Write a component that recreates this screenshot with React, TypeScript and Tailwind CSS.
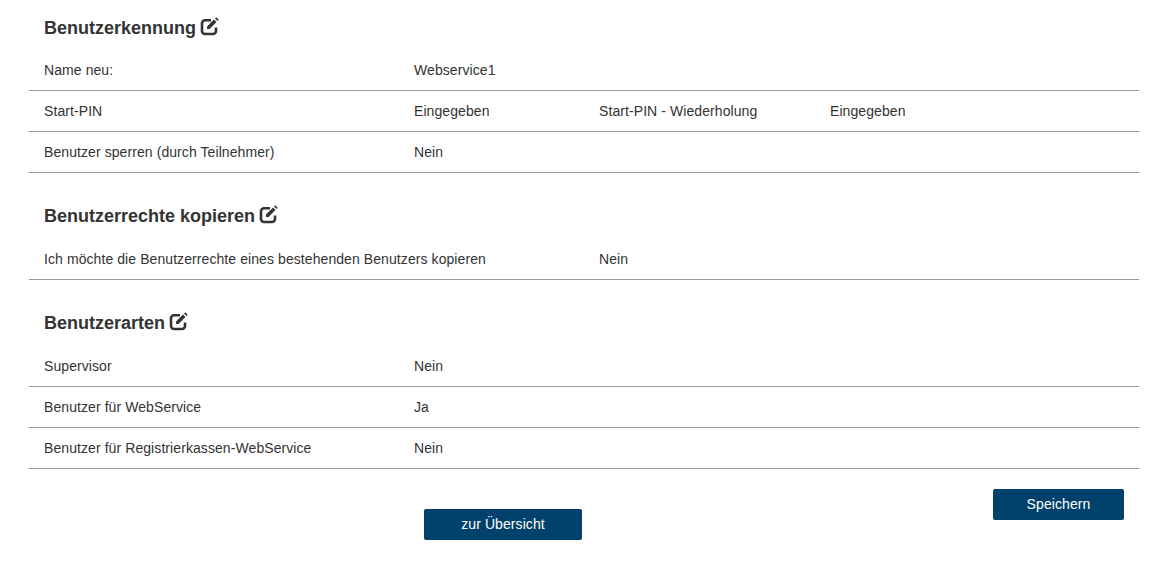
type Cell = { text: string; width: string };

function EditIcon({ className }: { className: string }) {
  return (
    <svg viewBox="0 0 20 20" className={`ml-[4px] h-[20px] w-[20px] text-[#333333] ${className}`} fill="none">
      <path
        d="M11 4.2H5a3 3 0 0 0-3 3V15a3 3 0 0 0 3 3h8a3 3 0 0 0 3-3v-3.5"
        stroke="currentColor"
        strokeWidth="2.6"
      />
      <path d="M7 10.5 14 3.5 16.5 6 9.5 13H7Z" fill="currentColor" />
      <path d="M15 2.5 16.2 1.3 18.7 3.8 17.5 5Z" fill="currentColor" />
    </svg>
  );
}

function Heading({ title, className, iconClass }: { title: string; className: string; iconClass: string }) {
  return (
    <h2 className={`flex items-center px-[15px] text-[18px] font-bold leading-[20px] text-[#333333] ${className}`}>
      {title}
      <EditIcon className={iconClass} />
    </h2>
  );
}

function Row({ cells }: { cells: Cell[] }) {
  return (
    <div className="flex h-[41px] items-center border-b border-[#999999] px-[15px] text-[14px] tracking-[0.08px] text-[#333333]">
      {cells.map((c) => (
        <div key={c.text} className={`shrink-0 ${c.width}`}>
          {c.text}
        </div>
      ))}
    </div>
  );
}

export default function App() {
  return (
    <div className="h-[567px] w-[1151px] overflow-hidden bg-white font-['Liberation_Sans',Arial,sans-serif]">
      <div className="ml-[29px] w-[1110px]">
        <Heading title="Benutzerkennung" className="pt-[18px]" iconClass="-mt-[5px]" />
        <div className="mt-[12px]">
          <Row cells={[{ text: "Name neu:", width: "w-[370px]" }, { text: "Webservice1", width: "w-[185px]" }]} />
          <Row
            cells={[
              { text: "Start-PIN", width: "w-[370px]" },
              { text: "Eingegeben", width: "w-[185px]" },
              { text: "Start-PIN - Wiederholung", width: "w-[231px]" },
              { text: "Eingegeben ", width: "w-[185px]" },
            ]}
          />
          <Row cells={[{ text: "Benutzer sperren (durch Teilnehmer)", width: "w-[370px]" }, { text: "Nein", width: "w-[185px]" }]} />
        </div>
        <Heading title="Benutzerrechte kopieren" className="mt-[33px]" iconClass="-mt-[5px]" />
        <div className="mt-[13px]">
          <Row
            cells={[
              { text: "Ich möchte die Benutzerrechte eines bestehenden Benutzers kopieren", width: "w-[555px]" },
              { text: "Nein", width: "w-[185px]" },
            ]}
          />
        </div>
        <Heading title="Benutzerarten" className="mt-[33px]" iconClass="-mt-[5px]" />
        <div className="mt-[13px]">
          <Row cells={[{ text: "Supervisor", width: "w-[370px]" }, { text: "Nein", width: "w-[185px]" }]} />
          <Row cells={[{ text: "Benutzer für WebService", width: "w-[370px]" }, { text: "Ja", width: "w-[185px]" }]} />
          <Row cells={[{ text: "Benutzer für Registrierkassen-WebService", width: "w-[370px]" }, { text: "Nein", width: "w-[185px]" }]} />
        </div>
        <div className="flex items-start pt-[20px]">
          <button className="ml-[395px] mt-[20px] h-[31px] w-[158px] rounded-[2px] bg-[#00426b] text-[14px] tracking-[0.08px] text-white">
            zur Übersicht
          </button>
          <button className="ml-[411px] h-[31px] w-[131px] rounded-[2px] bg-[#00426b] text-[14px] tracking-[0.08px] text-white">
            Speichern
          </button>
        </div>
      </div>
    </div>
  );
}
